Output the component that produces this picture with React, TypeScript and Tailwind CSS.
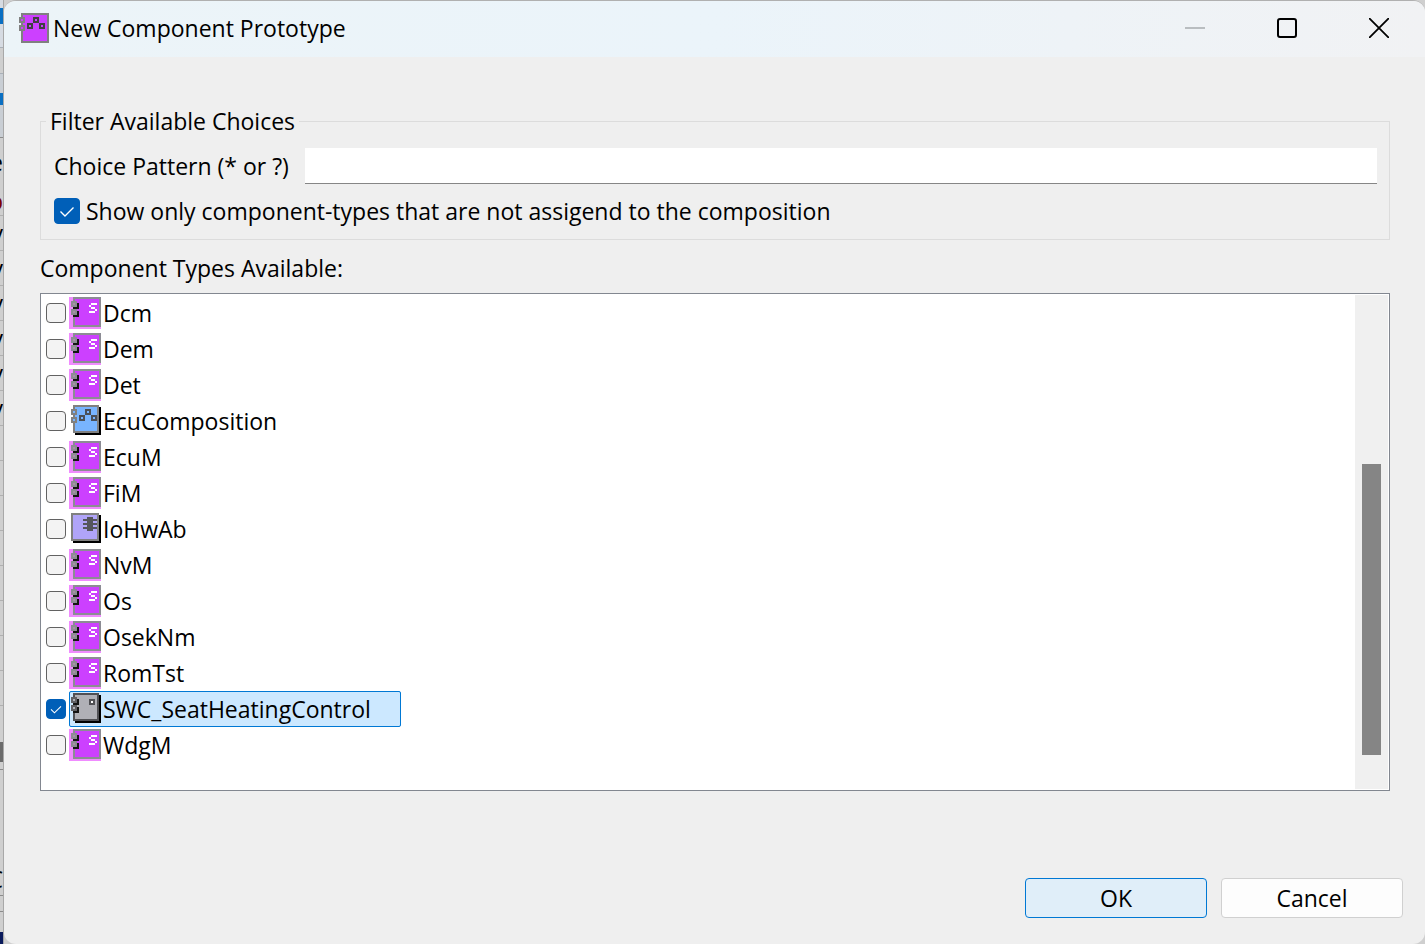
import { useState } from 'react';
import type { ReactNode } from 'react';

type Kind = 'service' | 'composition' | 'hardware' | 'software';

interface ComponentType {
  name: string;
  kind: Kind;
}

const COMPONENT_TYPES: ComponentType[] = [
  { name: 'Dcm', kind: 'service' },
  { name: 'Dem', kind: 'service' },
  { name: 'Det', kind: 'service' },
  { name: 'EcuComposition', kind: 'composition' },
  { name: 'EcuM', kind: 'service' },
  { name: 'FiM', kind: 'service' },
  { name: 'IoHwAb', kind: 'hardware' },
  { name: 'NvM', kind: 'service' },
  { name: 'Os', kind: 'service' },
  { name: 'OsekNm', kind: 'service' },
  { name: 'RomTst', kind: 'service' },
  { name: 'SWC_SeatHeatingControl', kind: 'software' },
  { name: 'WdgM', kind: 'service' },
];

// ── Icons (drawn on a 16x16 grid) ───────────────────────────────────────────
function PixelIcon({ size, children }: { size: 15 | 16; children: ReactNode }) {
  return (
    <svg
      viewBox={`0 0 ${size} ${size}`}
      className={size === 16 ? 'size-8 shrink-0' : 'size-[30px] shrink-0'}
      shapeRendering="crispEdges"
      aria-hidden="true"
    >
      {children}
    </svg>
  );
}

// 3x3 square with a one-cell hole
function Node({ x, y, color, hole }: { x: number; y: number; color: string; hole: string }) {
  return (
    <>
      <rect x={x} y={y} width={3} height={3} fill={color} />
      <rect x={x + 1} y={y + 1} width={1} height={1} fill={hole} />
    </>
  );
}

function ServiceIcon() {
  return (
    <PixelIcon size={16}>
      <rect width={16} height={16} fill="#f08cff" />
      <rect x={2} width={14} height={15} fill="#8c8c94" />
      <rect x={3} y={1} width={12} height={13} fill="#cc40ff" />
      <rect x={2} y={3} width={3} height={3} fill="#141414" />
      <rect x={2} y={7} width={3} height={3} fill="#141414" />
      <Node x={1} y={2} color="#8c8c94" hole="#a890a8" />
      <Node x={1} y={6} color="#8c8c94" hole="#a890a8" />
      <path d="M11 3h3v1h-3zM10 4h1v1h-1zM11 5h2v1h-2zM13 6h1v1h-1zM10 7h3v1h-3z" fill="#fff" />
    </PixelIcon>
  );
}

function CompositionIcon() {
  return (
    <PixelIcon size={16}>
      <rect x={3} y={1} width={13} height={14} fill="#000" />
      <rect x={2} width={13} height={14} fill="#808080" />
      <rect x={3} y={1} width={11} height={12} fill="#78b4ff" />
      <Node x={1} y={2} color="#808080" hole="#78b4ff" />
      <Node x={1} y={6} color="#808080" hole="#78b4ff" />
      <Node x={8} y={2} color="#4a4f58" hole="#78b4ff" />
      <Node x={5} y={5} color="#4a4f58" hole="#78b4ff" />
      <Node x={11} y={5} color="#4a4f58" hole="#78b4ff" />
    </PixelIcon>
  );
}

function HardwareIcon() {
  return (
    <PixelIcon size={16}>
      <rect x={2} y={1} width={14} height={14} fill="#000" />
      <rect x={1} width={14} height={14} fill="#808080" />
      <rect x={2} y={1} width={12} height={12} fill="#b0a4f8" />
      <path d="M9 2h3v7h-3zM7 3h7v1h-7zM7 5h7v1h-7zM7 7h7v1h-7z" fill="#55555c" />
    </PixelIcon>
  );
}

function SoftwareIcon() {
  return (
    <PixelIcon size={16}>
      <rect x={3} y={1} width={13} height={14} fill="#000" />
      <rect x={2} width={13} height={14} fill="#505054" />
      <rect x={3} y={1} width={11} height={12} fill="#b0b0b6" />
      <rect x={2} y={3} width={3} height={3} fill="#141414" />
      <rect x={2} y={7} width={3} height={3} fill="#141414" />
      <Node x={1} y={2} color="#606064" hole="#b0b0b6" />
      <Node x={1} y={6} color="#606064" hole="#b0b0b6" />
      <Node x={10} y={3} color="#505054" hole="#fff" />
    </PixelIcon>
  );
}

function WindowIcon() {
  return (
    <PixelIcon size={15}>
      <rect x={1} width={14} height={15} fill="#808080" />
      <rect x={2} y={1} width={12} height={13} fill="#cc40ff" />
      <Node x={0} y={2} color="#808080" hole="#cc40ff" />
      <Node x={0} y={6} color="#808080" hole="#cc40ff" />
      <Node x={7} y={2} color="#404040" hole="#cc40ff" />
      <Node x={4} y={5} color="#404040" hole="#cc40ff" />
      <Node x={10} y={5} color="#404040" hole="#cc40ff" />
    </PixelIcon>
  );
}

const ICONS: Record<Kind, () => ReactNode> = {
  service: ServiceIcon,
  composition: CompositionIcon,
  hardware: HardwareIcon,
  software: SoftwareIcon,
};

// ── Tick box ────────────────────────────────────────────────────────────────
interface CheckBoxProps {
  id: string;
  large?: boolean;
  checked: boolean;
  onChange: (checked: boolean) => void;
}

function CheckBox({ id, large, checked, onChange }: CheckBoxProps) {
  return (
    <span className={large ? 'grid size-[26px] shrink-0' : 'grid size-5 shrink-0'}>
      <input
        id={id}
        type="checkbox"
        checked={checked}
        onChange={(e) => onChange(e.target.checked)}
        className="col-start-1 row-start-1 size-full appearance-none rounded-[4px] border border-[#626262] bg-[#f3f3f3] checked:border-[#005fb8] checked:bg-[#005fb8]"
      />
      {checked && (
        <svg
          viewBox="0 0 26 26"
          className="pointer-events-none col-start-1 row-start-1 size-full"
          fill="none"
          stroke="#fff"
          strokeWidth="1.4"
          aria-hidden="true"
        >
          <path d="M6.5 13.5l4.5 4.5 8.5-8.5" />
        </svg>
      )}
    </span>
  );
}

// ── Edge of the window behind the dialog ────────────────────────────────────
const GRID_ROWS = ['v', 'v', 'v', 'v', 'v', 'v', '', '', '', '', '', '', '', ''];

function BackgroundEdge() {
  return (
    <div className="flex w-1 shrink-0 flex-col overflow-hidden border-r border-[#a8a8a8] bg-[#cfcfcf] text-black" aria-hidden="true">
      <div className="h-12 shrink-0 border-b border-[#a9b0b8] bg-[#d6dbe2] pt-2">
        <div className="h-4 bg-[#0a6fc2]" />
      </div>
      <div className="h-[26px] shrink-0 border-b border-[#a9b0b8]" />
      <div className="h-16 shrink-0 border-b border-[#8c8c8c] bg-[#c9ced4] pt-[19px]">
        <div className="h-3 bg-[#0a6fc2]" />
      </div>
      <div className="flex h-12 shrink-0 items-center justify-end">e</div>
      <div className="flex h-[30px] shrink-0 items-center justify-end border-b border-[#b0b0b0] text-[#7a0000]">p</div>
      {GRID_ROWS.map((letter, i) => (
        <div key={i} className="flex h-[35px] shrink-0 items-center justify-end border-b border-[#b0b0b0]">
          {letter}
        </div>
      ))}
      <div className="mt-9 h-5 shrink-0 bg-[#6b6b6b]" />
      <div className="h-2 shrink-0 border-b border-[#8c8c8c]" />
      <div className="flex grow items-end justify-end border-b border-[#8c8c8c]">C</div>
      <div className="h-4 shrink-0 border-b border-[#8c8c8c]" />
      <div className="h-5 shrink-0" />
      <div className="h-3 shrink-0 bg-[#0a1a5c]" />
    </div>
  );
}

export default function App() {
  const [pattern, setPattern] = useState('');
  const [onlyUnassigned, setOnlyUnassigned] = useState(true);
  const [selected, setSelected] = useState<string[]>(['SWC_SeatHeatingControl']);

  const toggle = (name: string, on: boolean) =>
    setSelected((prev) => (on ? [...prev, name] : prev.filter((n) => n !== name)));

  return (
    <div className="flex min-h-screen bg-[#cfcfcf] font-['Open_Sans','Noto_Sans_CJK_KR',sans-serif] text-[23px] leading-8 text-black">
      <BackgroundEdge />

      <main className="flex min-w-0 grow flex-col overflow-hidden rounded-xl border-t border-[#b0b0b0] bg-[#efefef]">
        {/* ── Title bar ── */}
        <header className="flex h-14 shrink-0 items-center bg-linear-to-r from-[#ecf4f8] via-[#ebf4fa] to-[#f1f2f4] pb-0.5 pl-[15px]">
          <WindowIcon />
          <h1 className="ml-1 grow">New Component Prototype</h1>
          <button type="button" aria-label="Minimize" className="flex h-full w-[92px] items-center justify-center text-[#b9bdc0]">
            <svg viewBox="0 0 20 20" className="size-5" stroke="currentColor" strokeWidth="2">
              <path d="M0 10h20" />
            </svg>
          </button>
          <button type="button" aria-label="Maximize" className="flex h-full w-[92px] items-center justify-center">
            <svg viewBox="0 0 20 20" className="size-5" fill="none" stroke="currentColor" strokeWidth="2">
              <rect x="1" y="1" width="18" height="18" rx="2" />
            </svg>
          </button>
          <button type="button" aria-label="Close" className="flex h-full w-[92px] items-center justify-center">
            <svg viewBox="0 0 20 20" className="size-5" stroke="currentColor" strokeWidth="1.8">
              <path d="M0 0l20 20M20 0L0 20" />
            </svg>
          </button>
        </header>

        <form className="flex grow flex-col pt-12 pb-[26px]" onSubmit={(e) => e.preventDefault()}>
          <div className="flex grow flex-col pr-[35px] pl-9">
            {/* ── Filter ── */}
            <fieldset className="min-w-0 border border-[#dcdcdc] pr-3 pb-3 pl-[13px]">
              <legend className="-ml-2 px-1">Filter Available Choices</legend>
              <div className="flex items-center pt-[11px]">
                <label htmlFor="pattern" className="w-[251px] shrink-0 whitespace-nowrap">
                  Choice Pattern (* or ?)
                </label>
                <input
                  id="pattern"
                  type="text"
                  value={pattern}
                  onChange={(e) => setPattern(e.target.value)}
                  className="h-9 min-w-0 grow border-b border-[#868686] bg-white px-2 outline-none"
                />
              </div>
              <div className="flex items-center gap-1.5 pt-[11px]">
                <CheckBox id="unassigned" large checked={onlyUnassigned} onChange={setOnlyUnassigned} />
                <label htmlFor="unassigned">Show only component-types that are not assigend to the composition</label>
              </div>
            </fieldset>

            {/* ── Component types ── */}
            <h2 className="pt-3 pb-[9px]">Component Types Available:</h2>
            <div className="flex grow border border-[#828790] bg-white p-px">
              <ul className="grow pb-6 pl-1">
                {COMPONENT_TYPES.map(({ name, kind }) => {
                  const Icon = ICONS[kind];
                  const on = selected.includes(name);
                  return (
                    <li key={name} className="flex h-9 items-center gap-[3px]">
                      <CheckBox id={name} checked={on} onChange={(v) => toggle(name, v)} />
                      <label
                        htmlFor={name}
                        className={
                          on
                            ? 'flex h-9 items-center gap-0.5 rounded-xs bg-[#cce8ff] pr-[30px] outline outline-[#0078d4] -outline-offset-1'
                            : 'flex h-9 items-center gap-0.5 pr-[30px]'
                        }
                      >
                        <Icon />
                        {name}
                      </label>
                    </li>
                  );
                })}
              </ul>
              <div className="flex w-[33px] shrink-0 flex-col bg-[#f0f0f0] px-[7px]" aria-hidden="true">
                <div className="grow-169" />
                <div className="grow-291 bg-[#858585]" />
                <div className="grow-34" />
              </div>
            </div>
          </div>

          {/* ── Actions ── */}
          <div className="flex justify-end gap-3.5 pt-[87px] pr-[22px]">
            <button type="submit" className="h-10 w-[182px] rounded-[4px] border border-[#0078d4] bg-[#e0eef9]">
              OK
            </button>
            <button type="button" className="h-10 w-[182px] rounded-[4px] border border-[#d0d0d0] bg-[#fdfdfd]">
              Cancel
            </button>
          </div>
        </form>
      </main>
    </div>
  );
}
